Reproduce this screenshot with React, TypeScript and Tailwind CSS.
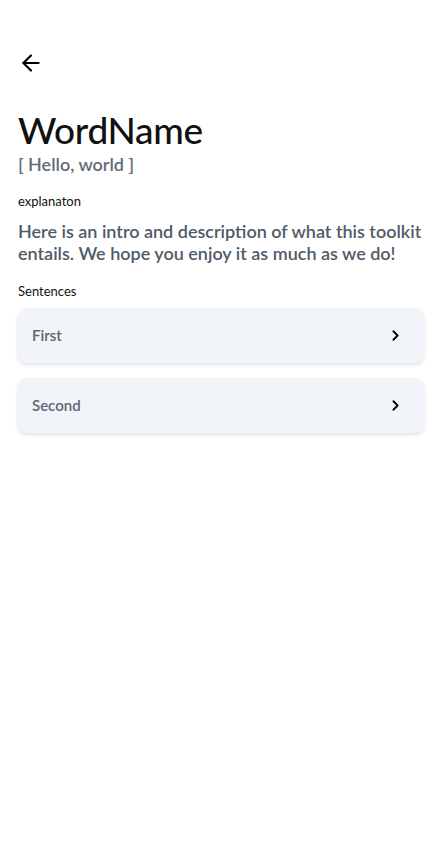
import { ChevronRight, ArrowLeft } from "lucide-react"

const ITEMS = ["First", "Second"]

export default function App() {
  return (
    <div className="min-h-screen bg-white px-[18px] pt-[50px] font-['Lato','Noto_Sans',sans-serif]">
      {/* Back */}
      <button className="block text-black">
        <ArrowLeft size={26} strokeWidth={2} />
      </button>

      {/* Title */}
      <h1 className="mt-[32px] text-[37px] leading-[44px] font-medium text-[#111111] tracking-[-0.3px]">WordName</h1>
      <p className="mt-[1px] text-[18px] leading-[22px] font-semibold text-[#5f6b78]">[ Hello, world ]</p>

      <p className="mt-[18px] text-[13px] leading-[16px] text-[#111111]">explanaton</p>
      <p className="mt-[11px] text-[18px] leading-[22px] font-semibold text-[#4f5b68]">
        Here is an intro and description of what this toolkit entails. We hope you enjoy it as much as we do!
      </p>

      <p className="mt-[19px] text-[13px] leading-[16px] text-[#111111]">Sentences</p>

      <div className="mt-[9px] flex flex-col gap-[15px] w-[406px]">
        {ITEMS.map((label) => (
          <div
            key={label}
            className="flex h-[55px] items-center justify-between rounded-[9px] bg-[#f1f4f8] pl-[14px] pr-[20px] shadow-[0_2px_4px_rgba(0,0,0,0.12)]"
          >
            <span className="text-[15px] font-semibold text-[#5b6672]">{label}</span>
            <ChevronRight size={17} strokeWidth={2.5} className="text-black" />
          </div>
        ))}
      </div>
    </div>
  )
}
